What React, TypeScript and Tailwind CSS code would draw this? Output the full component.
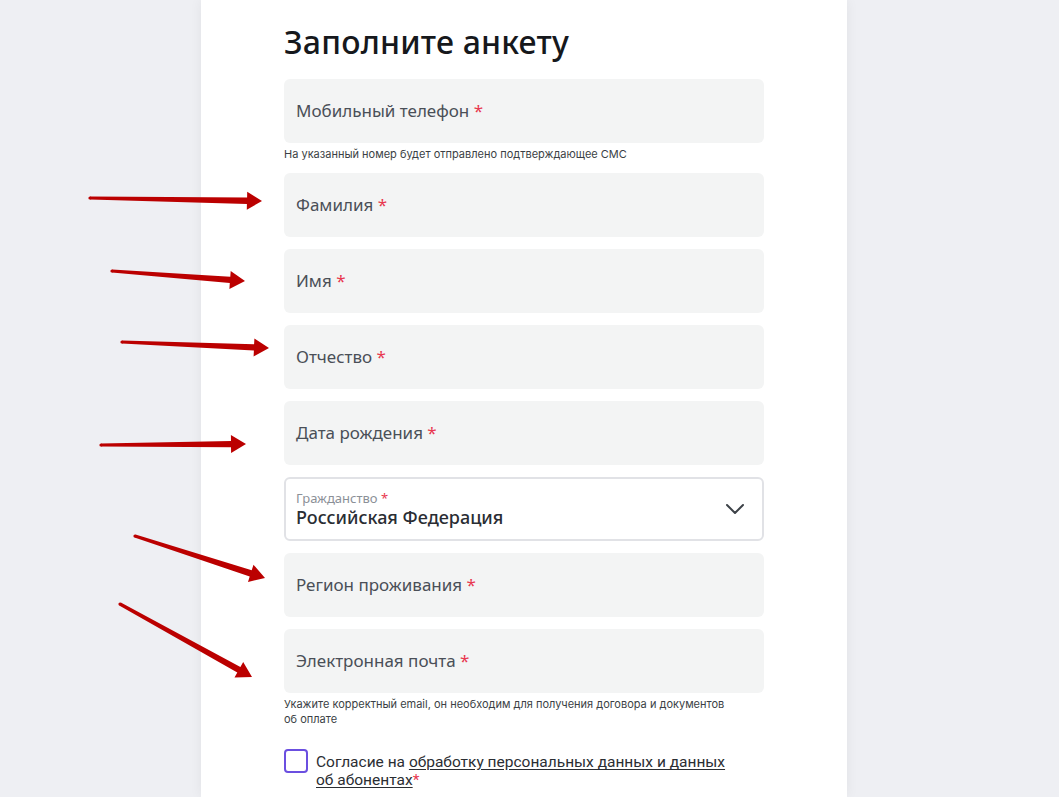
import React from "react";

type Arrow = { x1: number; y1: number; x2: number; y2: number };

const arrows: Arrow[] = [
  { x1: 90, y1: 198, x2: 262, y2: 201 },
  { x1: 112, y1: 271, x2: 245, y2: 281 },
  { x1: 122, y1: 342, x2: 269, y2: 348 },
  { x1: 101, y1: 445, x2: 246, y2: 444 },
  { x1: 135, y1: 536, x2: 265, y2: 578 },
  { x1: 120, y1: 604, x2: 252, y2: 677 },
];

function arrowPoints(a: Arrow): string {
  const dx = a.x2 - a.x1;
  const dy = a.y2 - a.y1;
  const len = Math.hypot(dx, dy);
  const ux = dx / len;
  const uy = dy / len;
  const nx = -uy;
  const ny = ux;
  const L = 15;
  const H = 9;
  const w1 = 1.6;
  const w2 = 3.2;
  const bx = a.x2 - ux * L;
  const by = a.y2 - uy * L;
  const p = (x: number, y: number) => `${x.toFixed(1)},${y.toFixed(1)}`;
  return [
    p(a.x1 + nx * w1, a.y1 + ny * w1),
    p(bx + nx * w2, by + ny * w2),
    p(bx + nx * H, by + ny * H),
    p(a.x2, a.y2),
    p(bx - nx * H, by - ny * H),
    p(bx - nx * w2, by - ny * w2),
    p(a.x1 - nx * w1, a.y1 - ny * w1),
  ].join(" ");
}

const Star = () => <span className="text-[#e8384f]"> *</span>;

function Field({ label }: { label: string }) {
  return (
    <div className="h-16 rounded-md bg-[#f3f4f4] px-3 flex items-center text-[17px] text-[#4a4f57]">
      <span>
        {label}
        <Star />
      </span>
    </div>
  );
}

export default function App() {
  return (
    <div
      className="relative w-full h-[797px] overflow-hidden bg-[#eeeff3] flex"
      style={{ fontFamily: '"Noto Sans", Roboto, sans-serif' }}
    >
      <div className="w-[201px] shrink-0" />
      <div className="w-[646px] shrink-0 h-full bg-white shadow-[0_0_12px_rgba(0,0,0,0.06)] pl-[83px] pr-[83px] pt-[22px]">
        <h1 className="h-[40px] leading-[40px] text-[32px] font-medium text-[#16181c] tracking-[0.2px]">
          Заполните анкету
        </h1>
        <div className="mt-[17px] flex flex-col gap-3">
          <div>
            <Field label="Мобильный телефон" />
            <div
              className="mt-[5px] text-[11px] leading-[13px] text-[#3b3f45]"
              style={{ fontFamily: "Inter, Roboto, sans-serif" }}
            >
              На указанный номер будет отправлено подтверждающее СМС
            </div>
          </div>
          <Field label="Фамилия" />
          <Field label="Имя" />
          <Field label="Отчество" />
          <Field label="Дата рождения" />
          <div className="h-16 rounded-md border-2 border-[#e1e2e6] bg-white pl-[10px] pr-4 flex items-center justify-between">
            <div className="flex flex-col">
              <span className="text-[13px] leading-[16px] text-[#8b9097]">
                Гражданство<Star />
              </span>
              <span className="text-[18px] leading-[22px] font-medium text-[#2a2d33]">
                Российская Федерация
              </span>
            </div>
            <svg width="20" height="12" viewBox="0 0 20 12" className="mr-[1px]">
              <path d="M2 2 L10 10 L18 2" fill="none" stroke="#3d4248" strokeWidth="2" strokeLinecap="round" strokeLinejoin="round" />
            </svg>
          </div>
          <Field label="Регион проживания" />
          <div>
            <Field label="Электронная почта" />
            <div
              className="mt-[4px] max-w-[446px] text-[11px] leading-[15px] text-[#3b3f45]"
              style={{ fontFamily: "Inter, Roboto, sans-serif" }}
            >
              Укажите корректный email, он необходим для получения договора и документов об оплате
            </div>
          </div>
        </div>
        <div className="mt-[22px] flex gap-2">
          <div className="w-6 h-6 shrink-0 rounded-[4px] border-2 border-[#6b4fe0] bg-white" />
          <div
            className="flex flex-col text-[15.5px] leading-[18px] text-[#2b2e33] pt-[4px]"
            style={{ fontFamily: "Roboto, sans-serif" }}
          >
            <div>
              Согласие на{" "}
              <span className="underline underline-offset-2">
                обработку персональных данных и данных
              </span>
            </div>
            <div>
              <span className="underline underline-offset-2">об абонентах</span>
              <span className="text-[#e8384f]">*</span>
            </div>
          </div>
        </div>
      </div>
      <svg className="absolute inset-0 pointer-events-none" width="1059" height="797">
        {arrows.map((a, i) => (
          <g key={i}>
            <polygon points={arrowPoints(a)} fill="#bb0000" />
            <circle cx={a.x1} cy={a.y1} r={1.6} fill="#bb0000" />
          </g>
        ))}
      </svg>
    </div>
  );
}
